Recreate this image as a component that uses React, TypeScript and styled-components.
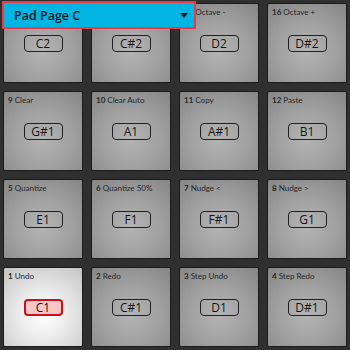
import { createGlobalStyle } from 'styled-components';
import styled from 'styled-components';

const Global = createGlobalStyle`
  html, body {
    margin: 0;
    padding: 0;
    background: #2f2f2f;
    font-family: 'Open Sans', 'Noto Sans', sans-serif;
  }
`;

const Layout = styled.div`
  position: relative;
  width: 350px;
  height: 350px;
  background: #2f2f2f;
  overflow: hidden;
`;

const Grid = styled.div`
  display: grid;
  grid-template-columns: repeat(4, 80px);
  grid-auto-rows: 80px;
  gap: 8px;
  padding: 3px;
`;

const Pad = styled.div<{ $active?: boolean }>`
  position: relative;
  box-sizing: border-box;
  display: flex;
  align-items: center;
  justify-content: center;
  border: 1.5px solid #1b1b1b;
  border-radius: 2px;
  background: ${p =>
    p.$active
      ? 'radial-gradient(circle at 50% 60%, #ffffff 0%, #eeeeee 35%, #c4c4c4 100%)'
      : 'radial-gradient(circle at 50% 60%, #b4b4b4 0%, #a2a2a2 45%, #868686 100%)'};
`;

const Label = styled.div`
  position: absolute;
  top: 3px;
  left: 4px;
  font-family: Lato, 'Open Sans', sans-serif;
  font-size: 8px;
  line-height: 10px;
  color: #262626;
  white-space: nowrap;

  b {
    font-weight: 700;
  }
`;

const Note = styled.div<{ $active?: boolean }>`
  box-sizing: border-box;
  width: 39px;
  height: 17px;
  display: flex;
  align-items: center;
  justify-content: center;
  border: ${p => (p.$active ? '2px solid #c8101e' : '1.5px solid #1f1f1f')};
  border-radius: 4px;
  background: ${p => (p.$active ? '#f9c6c6' : 'transparent')};
  font-size: 12px;
  color: #151515;
  margin-top: 1px;
`;

const Dropdown = styled.div`
  position: absolute;
  top: 1px;
  left: 2px;
  width: 194px;
  height: 28px;
  box-sizing: border-box;
  border: 2px solid #ec3a48;
  background: #00b5e2;
  display: flex;
  align-items: center;
  justify-content: space-between;
  padding: 0 6px 0 10px;
  font-family: 'Open Sans', sans-serif;
  font-size: 12.5px;
  font-weight: 600;
  color: #1a1a1a;
`;

const Arrow = styled.div`
  width: 0;
  height: 0;
  border-left: 4px solid transparent;
  border-right: 4px solid transparent;
  border-top: 5px solid #1a1a1a;
`;

const pads = [
  { n: 13, name: 'Metro', note: 'C2' },
  { n: 14, name: 'Tap', note: 'C#2' },
  { n: 15, name: 'Octave -', note: 'D2' },
  { n: 16, name: 'Octave +', note: 'D#2' },
  { n: 9, name: 'Clear', note: 'G#1' },
  { n: 10, name: 'Clear Auto', note: 'A1' },
  { n: 11, name: 'Copy', note: 'A#1' },
  { n: 12, name: 'Paste', note: 'B1' },
  { n: 5, name: 'Quantize', note: 'E1' },
  { n: 6, name: 'Quantize 50%', note: 'F1' },
  { n: 7, name: 'Nudge <', note: 'F#1' },
  { n: 8, name: 'Nudge >', note: 'G1' },
  { n: 1, name: 'Undo', note: 'C1' },
  { n: 2, name: 'Redo', note: 'C#1' },
  { n: 3, name: 'Step Undo', note: 'D1' },
  { n: 4, name: 'Step Redo', note: 'D#1' },
];

export default function App() {
  return (
    <Layout>
      <Global />
      <Grid>
        {pads.map(p => (
          <Pad key={p.n} $active={p.n === 1}>
            <Label>
              <b>{p.n}</b> {p.name}
            </Label>
            <Note $active={p.n === 1}>{p.note}</Note>
          </Pad>
        ))}
      </Grid>
      <Dropdown>
        Pad Page C
        <Arrow />
      </Dropdown>
    </Layout>
  );
}
